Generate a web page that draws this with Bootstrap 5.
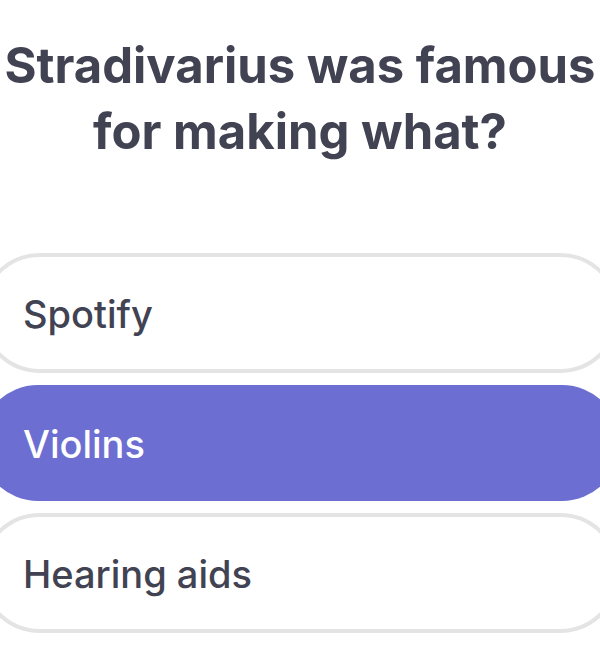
<!DOCTYPE html>
<html lang="en">
<head>
<meta charset="utf-8">
<meta name="viewport" content="width=device-width, initial-scale=1">
<title>Quiz</title>
<link href="https://cdn.jsdelivr.net/npm/bootstrap@5.3.0/dist/css/bootstrap.min.css" rel="stylesheet">
<style>
  body { font-family: Inter, "Liberation Sans", sans-serif; color: #414252; background: #fff; }
  .question { font-size: 49px; line-height: 66px; font-weight: 700; padding-top: 33px; }
  .answers { margin: 88px -20px 0; gap: 12px; }
  .answer {
    --bs-btn-color: #414252;
    --bs-btn-bg: #fff;
    --bs-btn-border-color: #e4e4e4;
    --bs-btn-hover-color: #414252;
    --bs-btn-hover-bg: #f7f7fb;
    --bs-btn-hover-border-color: #e4e4e4;
    --bs-btn-active-color: #fff;
    --bs-btn-active-bg: #6c6ed1;
    --bs-btn-border-width: 4px;
    --bs-btn-font-size: 38px;
    --bs-btn-line-height: 60px;
    --bs-btn-font-weight: 500;
    --bs-btn-border-radius: 60px;
    padding: 27px 39px 25px;
  }
  .btn-check:checked + .answer { border-width: 0; padding: 29px 43px 27px; }
</style>
</head>
<body class="overflow-x-hidden">
<main class="overflow-hidden pb-4">
  <form>
    <h1 class="question text-center mb-0" id="question">Stradivarius was famous for making what?</h1>
    <div class="answers d-flex flex-column" role="radiogroup" aria-labelledby="question">
      <input class="btn-check" type="radio" name="answer" id="spotify">
      <label class="btn answer text-start" for="spotify">Spotify</label>
      <input class="btn-check" type="radio" name="answer" id="violins" checked>
      <label class="btn answer text-start" for="violins">Violins</label>
      <input class="btn-check" type="radio" name="answer" id="hearing">
      <label class="btn answer text-start" for="hearing">Hearing aids</label>
    </div>
  </form>
</main>
<script src="https://cdn.jsdelivr.net/npm/bootstrap@5.3.0/dist/js/bootstrap.bundle.min.js"></script>
</body>
</html>
